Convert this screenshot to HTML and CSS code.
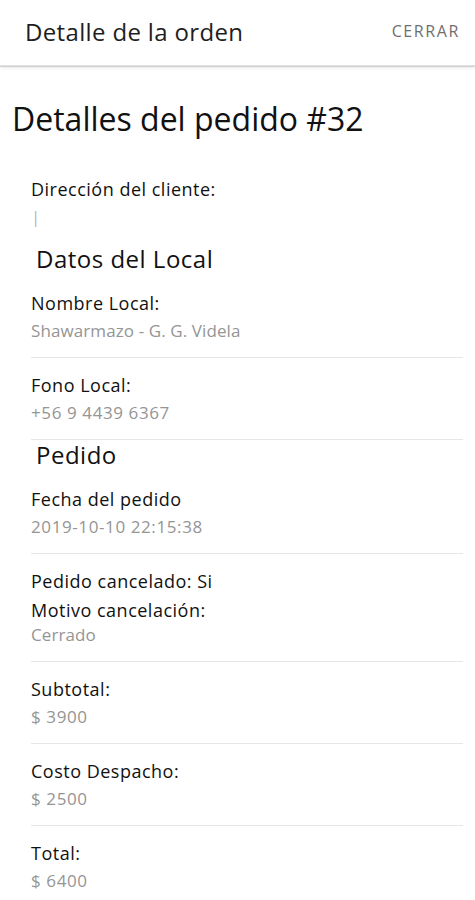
FILE: index.html
```html
<!DOCTYPE html>
<html lang="es">
<head>
<meta charset="utf-8">
<title>Detalle de la orden</title>
<link rel="stylesheet" href="styles.css">
</head>
<body>
<header class="topbar">
  <div class="topbar-title">Detalle de la orden</div>
  <div class="topbar-close">CERRAR</div>
</header>
<main class="content">
  <h1 class="page-title">Detalles del pedido #32</h1>
  <div class="list">
    <div class="item item-plain item-first">
      <div class="label">Dirección del cliente:</div>
      <div class="value">|</div>
    </div>
    <h2 class="section-title">Datos del Local</h2>
    <div class="item">
      <div class="label">Nombre Local:</div>
      <div class="value value-text">Shawarmazo - G. G. Videla</div>
    </div>
    <div class="item">
      <div class="label">Fono Local:</div>
      <div class="value">+56 9 4439 6367</div>
    </div>
    <h2 class="section-title section-title-tight">Pedido</h2>
    <div class="item">
      <div class="label">Fecha del pedido</div>
      <div class="value">2019-10-10 22:15:38</div>
    </div>
    <div class="item">
      <div class="label">Pedido cancelado: Si</div>
      <div class="label label-next">Motivo cancelación:</div>
      <div class="value value-text value-tight">Cerrado</div>
    </div>
    <div class="item">
      <div class="label">Subtotal:</div>
      <div class="value">$ 3900</div>
    </div>
    <div class="item">
      <div class="label">Costo Despacho:</div>
      <div class="value">$ 2500</div>
    </div>
    <div class="item item-plain">
      <div class="label">Total:</div>
      <div class="value">$ 6400</div>
    </div>
  </div>
</main>
</body>
</html>
```
FILE: styles.css
```css
* { box-sizing: border-box; }
html, body { margin: 0; padding: 0; background: #ffffff; }
body {
  font-family: "Open Sans", Lato, "Liberation Sans", sans-serif;
  color: #1c1c1c;
}
.topbar {
  height: 66px;
  display: flex;
  align-items: center;
  justify-content: space-between;
  padding: 0 15px 0 25px;
  background: #ffffff;
  box-shadow: 0 1px 1px rgba(0,0,0,0.12), 0 2px 3px rgba(0,0,0,0.08);
  border-bottom: 1px solid #e2e2e2;
}
.topbar-title {
  font-size: 24px;
  letter-spacing: 0.35px;
  color: #1e1e1e;
  line-height: 28px;
  margin-top: -1px;
}
.topbar-close {
  font-size: 16px;
  letter-spacing: 1.6px;
  color: #6f6f6f;
  margin-top: -3px;
}
.content {
  padding: 0 12px;
}
.page-title {
  margin: 34px 0 0 0;
  font-size: 32px;
  line-height: 38px;
  font-weight: 400;
  color: #111111;
}
.list {
  padding-left: 19px;
}
.item {
  padding: 17px 0 16px;
  border-bottom: 1px solid #e6e6e6;
}
.item-plain { border-bottom: none; }
.item-first { padding: 41px 0 0; }
.label {
  font-size: 18px;
  line-height: 20px;
  letter-spacing: 0.5px;
  font-weight: 500;
  color: #111111;
}
.label-next { margin-top: 9px; }
.value {
  margin-top: 8px;
  font-size: 17px;
  line-height: 20px;
  letter-spacing: 0.6px;
  color: #959595;
}
.value-text { letter-spacing: 0.1px; }
.value-tight { margin-top: 5px; }
.item-first .value { margin-top: 8px; color: #b5b5b5; }
.section-title {
  margin: 18px 0 3px;
  padding-left: 5px;
  font-size: 24px;
  line-height: 28px;
  letter-spacing: 0.5px;
  font-weight: 400;
  color: #111111;
}
.section-title-tight { margin-top: 1px; }
```
